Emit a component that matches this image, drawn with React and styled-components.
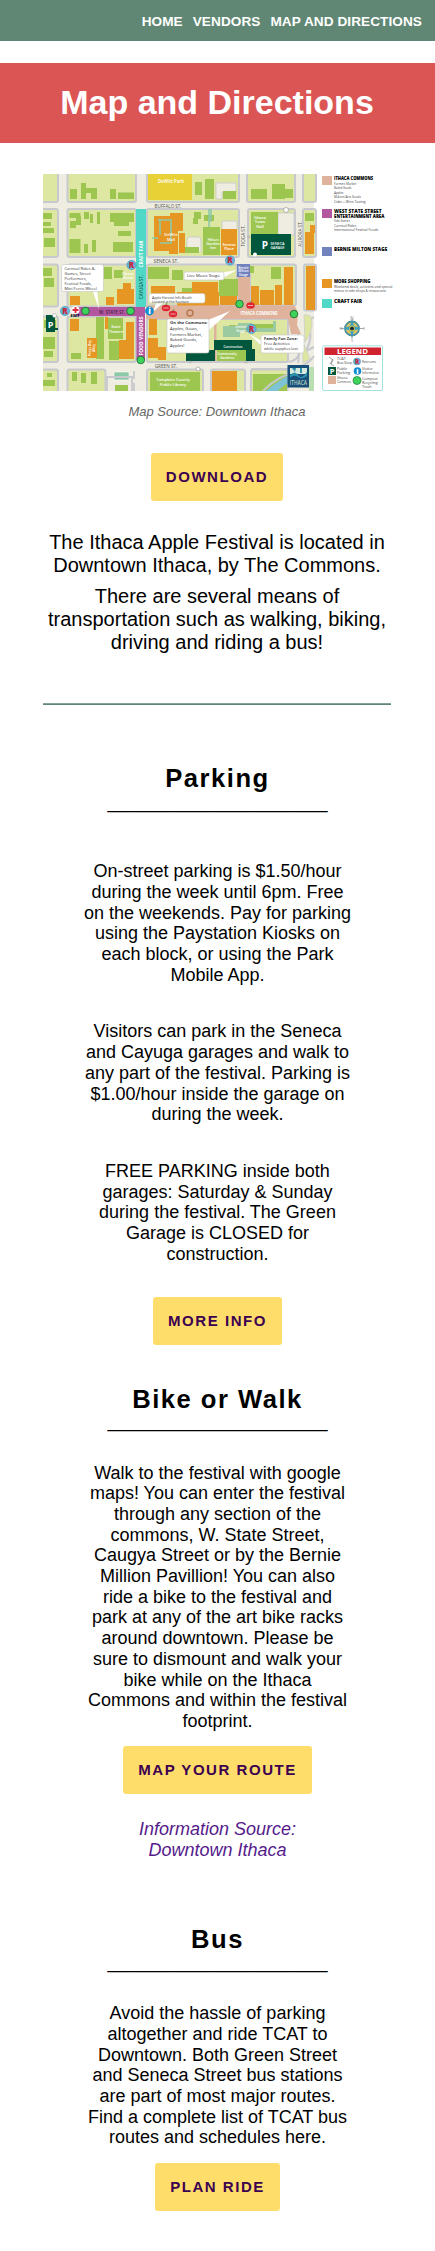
import React from "react";
import styled, { createGlobalStyle } from "styled-components";

const GlobalStyle = createGlobalStyle`
  * { box-sizing: border-box; }
  body {
    margin: 0;
    background: #fff;
    color: #000;
    font-family: "Liberation Sans", Arial, sans-serif;
    line-height: 1.15;
  }
`;

const Nav = styled.nav`
  display: flex;
  justify-content: flex-end;
  align-items: center;
  gap: 10px;
  height: 41px;
  padding: 3px 13px 0 0;
  background: #5f8774;
`;

const NavLink = styled.a`
  color: #fff;
  font-size: 13.6px;
  font-weight: 700;
  letter-spacing: 0.07px;
  text-transform: uppercase;
`;

const Banner = styled.header`
  display: flex;
  justify-content: center;
  align-items: center;
  height: 80px;
  margin-top: 22px;
  padding-right: 1px;
  background: #dc5555;
`;

const Title = styled.h1`
  margin: 0;
  color: #fff;
  font-size: 34px;
`;

const Main = styled.main`
  display: flex;
  flex-direction: column;
  align-items: center;
  padding: 31px 44px 40px 43px;
  text-align: center;
`;

const Figure = styled.figure`
  margin: 0;
  width: 348px;
`;

const MapDrawing = styled.svg`
  display: block;
  width: 352px;
  height: 217px;
  font-family: "Open Sans", "Noto Sans", sans-serif;
`;

const Caption = styled.figcaption`
  margin-top: 13px;
  color: #666;
  font-size: 13px;
  font-style: italic;
  line-height: 15px;
`;

const Button = styled.a`
  display: flex;
  align-items: center;
  height: 48px;
  margin-top: ${(p) => p.$gap}px;
  padding: 0 15px;
  border-radius: 3px;
  background: #ffdd6b;
  color: #3b0050;
  font-size: 15px;
  font-weight: 700;
  letter-spacing: 1.54px;
  text-transform: uppercase;
`;

const Intro = styled.div`
  display: flex;
  flex-direction: column;
  gap: 8px;
  width: 348px;
  margin-top: 29.5px;
  font-size: 20px;
`;

const Text = styled.p`
  margin: 0;
`;

const Divider = styled.hr`
  width: 348px;
  height: 2px;
  margin: 49.5px 0 0;
  border: 0;
  border-top: 1px solid #84a395;
  background: #5f8774;
`;

const Section = styled.section`
  display: flex;
  flex-direction: column;
  align-items: center;
  width: 268px;
  margin-top: ${(p) => p.$gap}px;
  margin-left: 1px;
  font-size: 18px;
`;

const Heading = styled.h2`
  margin: 0;
  font-size: 25.6px;
  letter-spacing: 1.5px;
`;

const Underline = styled.div`
  margin-top: -${(p) => p.$lift}px;
`;

const Copy = styled.div`
  display: flex;
  flex-direction: column;
  gap: 36px;
  margin-top: ${(p) => p.$gap}px;
`;

const Source = styled.a`
  width: 170px;
  margin-top: 25.65px;
  color: #551a8b;
  font-style: italic;
`;

const ROAD = "#efede1";
const WALK = "#c8c9ce";
const LAWN = "#dde7a2";
const GREEN = "#9cc650";
const ORANGE = "#e69723";
const PINK = "#dfb29b";
const PURPLE = "#b457a1";
const TEAL = "#4fd8c5";
const DARK = "#00573d";

const blocks = [
  [41, 172, 17, 30], [67.5, 172, 68.5, 30], [147, 172, 92, 30], [247, 172, 48, 30], [303, 172, 13, 30],
  [41, 209, 17, 48], [67.5, 209, 68.5, 48], [147, 209, 92, 48], [248, 209, 47, 48], [303, 209, 13, 48],
  [41, 264.5, 17, 42], [67.5, 264.5, 68.5, 42], [147, 264.5, 90, 41], [250, 264.5, 46, 41], [304, 264.5, 12, 46],
  [41, 316.5, 17, 45.5], [67.5, 316.5, 68.5, 45.5], [147, 319, 141, 43],
  [41, 369.5, 17, 24], [67.5, 369.5, 38, 24], [147, 369.5, 56, 24], [211, 369.5, 34, 24], [251, 369.5, 37, 24],
];

const greens = [
  [70, 189, 7, 10], [81, 183, 5, 16], [86, 188, 11, 5], [91, 192, 6, 7], [110, 189, 6, 10], [118, 192.5, 16, 6.5],
  [195, 182, 7, 13], [205, 179, 9, 20], [223, 191, 13, 8], [251, 189, 16, 10], [272, 184, 13, 15], [284, 189, 9, 9],
  [43, 213, 9, 6], [43, 222, 8, 4], [43, 228, 11, 5], [44, 238, 11, 9], [69.5, 213, 11, 5], [70, 221, 6, 7],
  [76, 216, 5, 9], [84, 212, 5, 7], [90, 214, 3, 9], [97, 212, 3, 12], [110, 213, 24, 9], [114, 219, 15, 7],
  [118, 231, 13, 5], [113, 242, 20, 10], [69.5, 239, 11, 14], [84, 244, 4, 9], [92, 240, 4, 12],
  [194, 212, 7, 7], [193, 218, 5, 6], [204, 215, 10, 6], [203, 227, 17, 28], [184, 247, 15, 6],
  [251, 212, 27, 23], [305, 213, 9, 8], [43, 268, 9, 8], [44, 278, 10, 9], [103, 267, 9, 12],
  [114, 270, 9, 8], [148, 267, 21, 12], [172, 270, 11, 10], [70, 281, 9, 7], [182, 288, 14, 6], [219, 279, 19, 17],
  [243, 266, 11, 7], [271, 267, 10, 12], [44, 320, 12, 8], [43, 337, 12, 12], [44, 351, 9, 6],
  [108, 318, 15, 21], [109, 341, 10, 19], [96, 317, 8, 42], [71, 353, 10, 6], [47, 373, 5, 4], [43, 380, 12, 6],
  [72, 372, 5, 9], [81, 373, 5, 10], [91, 372, 6, 12], [115, 385, 13, 6], [150, 372, 50, 19], [253, 374, 34, 18],
  [229, 325, 10, 6], [252, 324, 23, 8],
];

const oranges = [
  [154, 216, 16, 35], [169, 217, 9, 37], [170, 213, 13, 18], [179, 233, 6, 20], [221, 229, 16, 26],
  [305, 232, 9, 22], [310, 225, 5, 8], [70, 296, 10, 9], [117, 289, 17, 15], [123, 283, 8, 12], [106, 297, 8, 8],
  [151, 286, 24, 16], [177, 292, 42, 14], [192, 282, 26, 12], [220, 296, 17, 9], [251, 286, 8, 19], [260, 290, 14, 15],
  [275, 285, 7, 20], [284, 267, 9, 38], [306, 266, 9, 44], [70, 319, 9, 12], [87, 338, 10, 20], [105, 317, 3, 12],
  [126, 322, 8, 37], [119, 340, 8, 19], [149, 318, 8, 17], [148, 338, 10, 20], [212, 371, 25, 20], [158, 347, 8, 13],
];

const stops = [[85.5, 311], [130.5, 311], [140.8, 360], [239.5, 304], [294, 314]];
const restrooms = [[131.5, 265], [230, 260.5], [65, 311], [251.5, 329]];
const apples = [[166, 308], [173, 314], [250.5, 305.5]];

const legend = [
  { y: 176, color: PINK, title: ["ITHACA COMMONS"], lines: ["Farmers Market", "Baked Goods", "Apples", "Makers/Arts Goods", "Cider + Wine Tasting"] },
  { y: 209, color: PURPLE, title: ["WEST STATE STREET", "ENTERTAINMENT AREA"], lines: ["Kids Games", "Carnival Rides", "International Festival Foods"] },
  { y: 247, color: "#7182bd", title: ["BERNIE MILTON STAGE"], lines: [] },
  { y: 279, color: ORANGE, title: ["MORE SHOPPING"], lines: ["Weekend deals, activities and special", "menus in side shops & restaurants"] },
  { y: 299, color: TEAL, title: ["CRAFT FAIR"], lines: [] },
];

function Label({ x, y, size = 4, fill = "#fff", weight = 600, anchor = "middle", rotate, width, children }) {
  return (
    <text
      x={x}
      y={y}
      fontSize={size}
      fill={fill}
      fontWeight={weight}
      textAnchor={anchor}
      textLength={width}
      lengthAdjust="spacingAndGlyphs"
      transform={rotate ? `rotate(${rotate} ${x} ${y})` : undefined}
    >
      {children}
    </text>
  );
}

function Restroom({ x, y, r = 4.7 }) {
  return (
    <g>
      <circle cx={x} cy={y} r={r} fill="#62b5dc" stroke="#4b8dab" strokeWidth="0.5" />
      <Label x={x} y={y + r * 0.6} size={r * 1.7} fill="#c72739" weight={800}>R</Label>
    </g>
  );
}

function Callout({ x, y, w, h, tail, lines, size = 4, lead = 5.6, bold }) {
  return (
    <g>
      <path d={tail} fill="#fff" />
      <rect x={x} y={y} width={w} height={h} rx="2" fill="#fff" stroke="#c5c6bf" strokeWidth="0.6" />
      {lines.map((line, i) => (
        <Label key={line} x={x + 3} y={y + 5.3 + i * lead} size={size} fill="#333" weight={bold && i === 0 ? 700 : 500} anchor="start">
          {line}
        </Label>
      ))}
    </g>
  );
}

function StreetMap() {
  return (
    <g>
      <rect x="43" y="174" width="271" height="217" fill={ROAD} />
      {blocks.map(([x, y, w, h]) => (
        <rect key={`${x}-${y}`} x={x} y={y} width={w} height={h} rx="2" fill={LAWN} stroke={WALK} strokeWidth="2" />
      ))}
      <path d="M216 183h20v9h-14v7h-6zM222 221h15v9h-15zM278 213h16v22h-9v17h-7zM187 247v-7q0-3 3-3h8q3 0 3 3v12" fill={ROAD} stroke={WALK} strokeWidth="0.8" />
      {greens.map(([x, y, w, h]) => <rect key={`g${x}-${y}`} x={x} y={y} width={w} height={h} fill={GREEN} />)}
      {oranges.map(([x, y, w, h]) => <rect key={`o${x}-${y}`} x={x} y={y} width={w} height={h} fill={ORANGE} />)}
      <path d="M158 220h13v23h-11M152 238h6M209 209v18M211 209v13M160 220v15" fill="none" stroke="#8ec9a8" strokeWidth="1.6" />
      <rect x="148" y="174" width="44" height="26" fill="#e8d136" />
      <Label x={171} y={183} size={4.5}>DeWitt Park</Label>
      <Label x={171} y={236} size={4}>DeWitt</Label>
      <Label x={171} y={241} size={4}>Mall</Label>
      <Label x={213} y={241} size={3.8}>Hilton</Label>
      <Label x={213} y={245} size={3.8}>Garden</Label>
      <Label x={213} y={249} size={3.8}>Inn</Label>
      <Label x={229} y={246} size={3.8}>Seneca</Label>
      <Label x={229} y={250} size={3.8}>Place</Label>
      <Label x={260} y={219} size={4}>Ithaca</Label>
      <Label x={260} y={223} size={4}>Town</Label>
      <Label x={260} y={227.5} size={4}>Hall</Label>

      <path d="M288 391L314 375V365L300 362 292 371z" fill={ROAD} />
      <path d="M263 391q15-16 37-20M251 369h38q18-2 25-13M298 363q3-15 0-32-8-2-8-12M314 317q-9 5-5 12t-3 22l8-4M289 362q9-2 10-9" fill="none" stroke={WALK} strokeWidth="2" />
      <path d="M266 391Q280 379 290 375V382Q282 386 278 391z" fill="#7dc3d5" />
      <path d="M304 315q8-2 8 8t-7 19zM302 340l8 19-7 4z" fill={LAWN} stroke={WALK} strokeWidth="0.7" />
      <rect x="309" y="367" width="5" height="24" fill="#b9dfb3" />

      <rect x="136" y="209" width="10" height="98" fill={TEAL} />
      <rect x="136.5" y="307" width="8.5" height="53" fill={PURPLE} />
      <path d="M146 305.5H238V275H250V305.5H294Q299 309 297 325L301 334H291L288 319H146z" fill={PINK} />
      <rect x="214" y="319" width="2.5" height="42" fill={PINK} />
      <rect x="77" y="307" width="68" height="9" fill={PURPLE} />
      <Label x={143} y={254} size={5.8} rotate={-90} width={27} weight={700}>CRAFT FAIR</Label>
      <Label x={143} y={287} size={5} rotate={-90} fill="#195f5a" width={24}>CAYUGA ST.</Label>
      <Label x={142.7} y={336} size={5.5} rotate={-90} width={39} weight={700}>FOOD VENDORS</Label>
      <Label x={112} y={313.5} size={5} fill="#43223d" width={26}>W. STATE ST.</Label>
      <Label x={259} y={314.5} size={6} width={37} weight={700}>ITHACA COMMONS</Label>
      <circle cx="190" cy="313" r="3" fill="none" stroke="#b5794d" strokeWidth="1.5" />
      <Label x={168} y={208} size={4.7} fill="#555" weight={500} width={27}>BUFFALO ST.</Label>
      <Label x={166} y={262.5} size={4.7} fill="#555" weight={500}>SENECA ST.</Label>
      <Label x={166} y={367.8} size={4.7} fill="#555" weight={500}>GREEN ST.</Label>
      <Label x={245} y={236} size={4.7} rotate={-90} fill="#555" weight={500}>TIOGA ST.</Label>
      <Label x={302} y={234} size={4.5} rotate={-90} fill="#555" weight={500}>AURORA ST.</Label>

      <rect x="237" y="264" width="13" height="13" fill="#7182bd" />
      <Label x={243.5} y={268.5} size={3.3}>Bernie</Label>
      <Label x={243.5} y={272} size={3.3}>Milton</Label>
      <Label x={243.5} y={275.5} size={3.3}>Stage</Label>

      <rect x="251" y="234" width="40" height="21" fill={DARK} />
      <Label x={265} y={248.5} size={10} weight={700}>P</Label>
      <Label x={277.5} y={244.5} size={3.8} width={14}>SENECA</Label>
      <Label x={277.5} y={248.5} size={3.8} width={14}>GARAGE</Label>
      <circle cx="286" cy="210" r="2.5" fill="#fff" stroke="#999" strokeWidth="0.7" />
      <circle cx="255" cy="254.5" r="2" fill="#fff" />
      <rect x="46" y="315" width="9" height="17" fill={DARK} />
      <rect x="55" y="328" width="3" height="2" fill={DARK} />
      <Label x={50.5} y={328} size={9} weight={700}>P</Label>
      <circle cx="54.5" cy="315.5" r="2" fill="#fff" stroke="#999" strokeWidth="0.5" />

      <path d="M223 326h15v-3h14v5h21v-7h3v11h-36v5h-17z" fill="#9bc9a0" />
      <rect x="214" y="340" width="38" height="10" fill={DARK} />
      <rect x="186" y="350" width="29" height="11" fill={DARK} />
      <rect x="246" y="349" width="9" height="12" fill={DARK} />
      <rect x="217" y="350" width="29" height="11" fill={GREEN} />
      <Label x={233} y={347.5} size={4} width={19}>Construction</Label>
      <Label x={227} y={355} size={3.5}>Community</Label>
      <Label x={227} y={359} size={3.5}>Gardens</Label>
      <Label x={241} y={328} size={3.5}>Center</Label>
      <Label x={241} y={332} size={3.5}>Stage</Label>
      <rect x="114" y="372" width="15" height="8" fill="#8bc8a6" stroke="#fff" strokeWidth="0.6" />
      <path d="M107 391v-14h25v14M134 371v8M134 383v8" fill="none" stroke={WALK} strokeWidth="1.8" />
      <Label x={116} y={328} size={3.8}>State</Label>
      <Label x={116} y={332.5} size={3.8}>Theatre</Label>
      <Label x={91} y={348} size={3.5} rotate={-90}>Press Bay</Label>
      <Label x={95} y={348} size={3.5} rotate={-90}>Alley</Label>
      <Label x={128} y={274.5} size={3.5}>Clinton</Label>
      <Label x={128} y={279} size={3.5}>House</Label>
      <Label x={173} y={381} size={4}>Tompkins County</Label>
      <Label x={173} y={386} size={4}>Public Library</Label>

      <Callout x={61.5} y={264.5} w={42} h={27} lead={5} tail="M92 289L99 309 97 289z" lines={["Carnival Rides &", "Games, Street", "Performers,", "Festival Foods,", "Mini Ferris Wheel"]} />
      <Callout x={184} y={272} w={40} h={8} tail="M220 273L237 270 223 278z" lines={["Live Music Stage"]} size={4.3} />
      <Callout x={149} y={293.5} w={56} h={9.5} lead={4} tail="M157 301L153 312 164 302z" lines={["Apple Harvest Info Booth", "Located at the fountain"]} size={3.4} />
      <Callout x={167} y={319} w={42} h={34} tail="M208 320L230 311 208 331z" lines={["On the Commons:", "Apples, Goats,", "Farmers Market,", "Baked Goods,", "Apples!"]} size={4.2} bold />
      <Callout x={261} y={335} w={43} h={18} lead={5} tail="M262 341L249 334 263 347z" lines={["Family Fun Zone:", "Free Activities", "while supplies last"]} size={4} bold />

      {stops.map(([x, y]) => <circle key={`s${x}`} cx={x} cy={y} r="3.8" fill="#3ed45b" stroke="#17632c" strokeWidth="0.8" />)}
      {restrooms.map(([x, y]) => <Restroom key={`r${x}`} x={x} y={y} />)}
      {apples.map(([x, y]) => (
        <g key={`a${x}`}>
          <ellipse cx={x} cy={y} rx="4.2" ry="3.2" fill="#df2433" />
          <path d={`M${x - 2.6} ${y}h5.2`} stroke="#f6c9c5" strokeWidth="0.8" />
          <path d={`M${x} ${y - 3}l1-2`} stroke="#5b7a28" strokeWidth="0.8" />
        </g>
      ))}
      <circle cx="75.5" cy="310" r="4" fill="#fff" />
      <path d="M75.5 307v6M72.5 310h6" stroke="#e0293b" strokeWidth="1.8" />
      <Label x={75} y={317} size={4.2} fill="#111" weight={800}>EMT</Label>
      <circle cx="149.5" cy="311" r="4.4" fill="#118bd2" />
      <Label x={149.5} y={314} size={8} weight={800}>i</Label>
      <g fill="#fff" stroke="#888" strokeWidth="0.6">
        <circle cx="198" cy="369" r="2" />
        <circle cx="190" cy="362" r="1" />
        <circle cx="246" cy="362" r="1" />
        <circle cx="249" cy="237" r="1" />
      </g>
      <rect x="287.5" y="365" width="21.5" height="22.5" fill="#174f79" />
      <path d="M290 368h17v6h-17z" fill="#d7e8dc" />
      <path d="M290 375q5-5 8 0t9-3v4q-5 4-9 1t-8 1zM292 368l3 4 1-4M300 368v5h2v-5" fill="#2b91ad" />
      <Label x={298.3} y={384.5} size={6.6} fill="#bcd6c1" width={17}>ITHACA</Label>
    </g>
  );
}

function MapLegend() {
  return (
    <g>
      {legend.map(({ y, color, title, lines }) => (
        <g key={title[0]}>
          <rect x="322" y={y} width="10" height="9" fill={color} />
          {title.map((t, i) => (
            <Label key={t} x={334} y={y + 4 + i * 4.8} size={4.6} fill="#000" weight={800} anchor="start" width={t.length * 2.8}>{t}</Label>
          ))}
          {lines.map((t, i) => (
            <Label key={t} x={334} y={y + 8.5 + (title.length - 1) * 4.8 + i * 4.5} size={3.5} fill="#444" weight={400} anchor="start" width={t.length * 1.58}>{t}</Label>
          ))}
        </g>
      ))}
      <path d="M340 328.5h24M352 318v21" stroke="#888" strokeWidth="0.7" />
      <circle cx="352" cy="328.5" r="7" fill="#dcc660" stroke="#4e8e9b" strokeWidth="1.8" />
      <path d="M352 320l2 6 7 2.5-7 2-2 7-2-7-7-2 7-2.5z" fill="#35a0c4" />
      <circle cx="352" cy="328.5" r="2.5" fill="#172d34" stroke="#e8d34e" />
      <Label x={352} y={320} size={5} fill="#999" weight={400}>N</Label>
      <Label x={352} y={342} size={4} fill="#999" weight={400}>S</Label>
      <Label x={341} y={330} size={4} fill="#999" weight={400}>W</Label>
      <Label x={364} y={330} size={4} fill="#999" weight={400}>E</Label>

      <rect x="322.5" y="345.8" width="60" height="44.7" rx="1.5" fill="#fff" stroke="#8adbd7" strokeWidth="0.8" />
      <rect x="324.5" y="347.5" width="56.5" height="7.5" fill="#cf2430" />
      <Label x={352.5} y={353.5} size={6.2} weight={700} width={31}>LEGEND</Label>
      <path d="M329 357l4 3-2 4 3 2M330 364l3-5" fill="none" stroke="#888" strokeWidth="0.8" />
      <Label x={337} y={360} size={3.7} fill="#444" anchor="start" weight={400}>TCAT</Label>
      <Label x={337} y={364} size={3.7} fill="#444" anchor="start" weight={400}>Bus Stop</Label>
      <Restroom x={357} y={361.5} r={3.6} />
      <Label x={362} y={363} size={3.5} fill="#444" anchor="start" weight={400} width={14}>Restrooms</Label>
      <rect x="328" y="367" width="8" height="8" fill={DARK} />
      <Label x={332} y={373.7} size={7.5} weight={700}>P</Label>
      <Label x={337} y={370} size={3.7} fill="#444" anchor="start" weight={400}>Public</Label>
      <Label x={337} y={374} size={3.7} fill="#444" anchor="start" weight={400}>Parking</Label>
      <circle cx="357.5" cy="371" r="3.8" fill="#118bd2" />
      <Label x={357.5} y={373.8} size={7} weight={800}>i</Label>
      <Label x={362} y={370} size={3.7} fill="#444" anchor="start" weight={400}>Visitor</Label>
      <Label x={362} y={374} size={3.5} fill="#444" anchor="start" weight={400} width={17}>Information</Label>
      <rect x="328" y="376" width="8" height="8" fill={PINK} />
      <Label x={337} y={379} size={3.7} fill="#444" anchor="start" weight={400}>Ithaca</Label>
      <Label x={337} y={383} size={3.5} fill="#444" anchor="start" weight={400} width={14}>Commons</Label>
      <circle cx="357" cy="380.5" r="4" fill="#3ed45b" stroke="#248646" strokeWidth="0.8" />
      <Label x={362} y={380} size={3.7} fill="#444" anchor="start" weight={400}>Compost</Label>
      <Label x={362} y={384} size={3.7} fill="#444" anchor="start" weight={400}>Recycling</Label>
      <Label x={362} y={388} size={3.7} fill="#444" anchor="start" weight={400}>Trash</Label>
    </g>
  );
}

function SectionTitle({ children, lift = 1.4 }) {
  return (
    <>
      <Heading>{children}</Heading>
      <Underline $lift={lift}>______________________</Underline>
    </>
  );
}

export default function App() {
  return (
    <>
      <GlobalStyle />
      <Nav>
        <NavLink>Home</NavLink>
        <NavLink>Vendors</NavLink>
        <NavLink>Map and Directions</NavLink>
      </Nav>
      <Banner>
        <Title>Map and Directions</Title>
      </Banner>
      <Main>
        <Figure>
          <MapDrawing viewBox="43 174 352 217">
            <StreetMap />
            <MapLegend />
          </MapDrawing>
          <Caption>Map Source: Downtown Ithaca</Caption>
        </Figure>
        <Button $gap={34}>Download</Button>
        <Intro>
          <Text>The Ithaca Apple Festival is located in Downtown Ithaca, by The Commons.</Text>
          <Text>There are several means of transportation such as walking, biking, driving and riding a bus!</Text>
        </Intro>
        <Divider />
        <Section $gap={59.3}>
          <SectionTitle>Parking</SectionTitle>
          <Copy $gap={48.34}>
            <Text>
              On-street parking is $1.50/hour during the week until 6pm. Free on the weekends. Pay for parking using
              the Paystation Kiosks on each block, or using the Park Mobile App.
            </Text>
            <Text>
              Visitors can park in the Seneca and Cayuga garages and walk to any part of the festival. Parking is
              $1.00/hour inside the garage on during the week.
            </Text>
            <Text>
              FREE PARKING inside both garages: Saturday &amp; Sunday during the festival. The Green Garage is CLOSED
              for construction.
            </Text>
          </Copy>
          <Button $gap={32.4}>More Info</Button>
        </Section>
        <Section $gap={40.1}>
          <SectionTitle lift={3.2}>Bike or Walk</SectionTitle>
          <Copy $gap={30.9}>
            <Text>
              Walk to the festival with google maps! You can enter the festival through any section of the commons, W.
              State Street, Caugya Street or by the Bernie Million Pavillion! You can also ride a bike to the festival
              and park at any of the art bike racks around downtown. Please be sure to dismount and walk your bike
              while on the Ithaca Commons and within the festival footprint.
            </Text>
          </Copy>
          <Button $gap={14}>Map Your Route</Button>
          <Source>Information Source: Downtown Ithaca</Source>
        </Section>
        <Section $gap={64}>
          <SectionTitle lift={2.2}>Bus</SectionTitle>
          <Copy $gap={30.7}>
            <Text>
              Avoid the hassle of parking altogether and ride TCAT to Downtown. Both Green Street and Seneca Street
              bus stations are part of most major routes. Find a complete list of TCAT bus routes and schedules here.
            </Text>
          </Copy>
          <Button $gap={15}>Plan Ride</Button>
        </Section>
      </Main>
    </>
  );
}
